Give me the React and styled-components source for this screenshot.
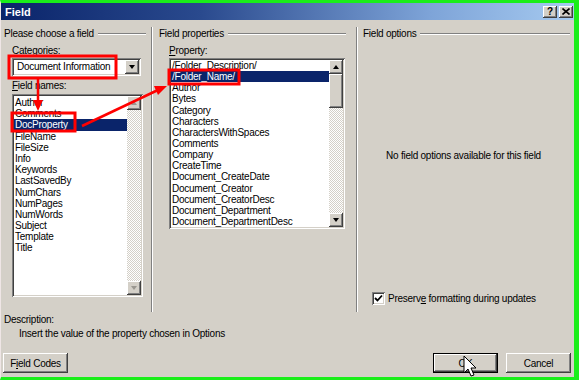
import React from "react";
import styled, { createGlobalStyle } from "styled-components";

const GlobalStyle = createGlobalStyle`
  html, body { margin: 0; padding: 0; background: #fff; }
  body {
    font-family: "Liberation Sans", Arial, sans-serif;
    font-size: 10px;
    letter-spacing: -0.25px;
    color: #000;
  }
`;

const raised = `
  background: #d4d0c8;
  box-shadow: inset -1px -1px #404040, inset 1px 1px #fff,
    inset -2px -2px #808080, inset 2px 2px #d4d0c8;
`;

const sunken = `
  background: #fff;
  box-shadow: inset 1px 1px #808080, inset -1px -1px #fff,
    inset 2px 2px #404040, inset -2px -2px #d4d0c8;
`;

const Frame = styled.div`
  position: relative;
  width: 579px;
  height: 380px;
  box-sizing: border-box;
  border-top: 3px solid #1aee1a;
  border-right: 5px solid #1aee1a;
  border-bottom: 3px solid #1aee1a;
  border-left: 1px solid #efe6e6;
  background: #d4d0c8;
  display: flex;
  flex-direction: column;
  overflow: hidden;
`;

const TitleBar = styled.div`
  height: 17px;
  flex: none;
  display: flex;
  align-items: center;
  padding: 0 1px 0 4px;
  background: linear-gradient(90deg, #0a246a 0%, #2a4a8e 35%, #7ea4d8 75%, #a6caf0 100%);
`;

const Title = styled.span`
  flex: 1;
  color: #fff;
  font-weight: bold;
  font-size: 11px;
  letter-spacing: 0;
`;

const CaptionButton = styled.div`
  ${raised}
  width: 14px;
  height: 12px;
  margin-left: 2px;
  display: flex;
  align-items: center;
  justify-content: center;
  font-weight: bold;
  font-size: 10px;
  line-height: 1;
`;

const Main = styled.div`
  height: 292px;
  flex: none;
  display: flex;
`;

const Column = styled.div`
  width: ${(p) => p.$w || "auto"};
  flex: ${(p) => (p.$w ? "none" : "1")};
  display: flex;
  flex-direction: column;
  padding-left: ${(p) => p.$pl}px;
  padding-right: ${(p) => p.$pr}px;
  box-sizing: border-box;
`;

const Divider = styled.div`
  width: 0;
  margin-top: 7px;
  border-left: 1px solid #808080;
  border-right: 1px solid #fff;
`;

const GroupHeader = styled.div`
  display: flex;
  align-items: center;
  padding-top: 7px;
  height: 13px;
  line-height: 13px;
  gap: 4px;
`;

const Rule = styled.div`
  flex: 1;
  border-top: 1px solid #808080;
  border-bottom: 1px solid #fff;
`;

const Inset = styled.div`
  display: flex;
  flex-direction: column;
  padding-left: ${(p) => p.$pl}px;
`;

const Label = styled.div`
  line-height: 13px;
  margin-top: ${(p) => p.$mt}px;
`;

const Combo = styled.div`
  ${sunken}
  width: 129px;
  height: 18px;
  margin-top: 1px;
  box-sizing: border-box;
  padding: 2px;
  display: flex;
  align-items: stretch;
`;

const ComboText = styled.div`
  flex: 1;
  padding-left: 3px;
  line-height: 14px;
  white-space: nowrap;
`;

const ListBox = styled.div`
  ${sunken}
  width: ${(p) => p.$w}px;
  height: ${(p) => p.$h}px;
  margin-top: ${(p) => p.$mt}px;
  box-sizing: border-box;
  padding: 2px;
  display: flex;
`;

const Items = styled.div`
  flex: 1;
  padding-top: ${(p) => p.$pt}px;
  overflow: hidden;
`;

const Item = styled.div`
  height: ${(p) => p.$lh}px;
  line-height: ${(p) => p.$lh}px;
  padding-left: 1px;
  white-space: nowrap;
  background: ${(p) => (p.$selected ? "#0a246a" : "transparent")};
  color: ${(p) => (p.$selected ? "#fff" : "#000")};
`;

const ScrollBar = styled.div`
  width: 14px;
  display: flex;
  flex-direction: column;
  background-color: #ece9e4;
  background-image: repeating-conic-gradient(#d4d0c8 0 25%, #fff 0 50%);
  background-size: 2px 2px;
`;

const ScrollButton = styled.div`
  ${raised}
  height: ${(p) => p.$h || 14}px;
  width: ${(p) => (p.$wide ? "14px" : "auto")};
  flex: none;
  display: flex;
  align-items: center;
  justify-content: center;
`;

const Arrow = styled.div`
  width: 0;
  height: 0;
  border-left: 3.5px solid transparent;
  border-right: 3.5px solid transparent;
  ${(p) => (p.$up ? "border-bottom" : "border-top")}: 4px solid ${(p) =>
    p.$disabled ? "#9a9790" : "#000"};
`;

const Track = styled.div`
  flex: 1;
`;

const Message = styled.div`
  text-align: center;
  line-height: 13px;
  margin-top: 109px;
  padding-right: 6px;
`;

const CheckRow = styled.div`
  display: flex;
  align-items: center;
  gap: 3px;
  margin-top: 130px;
  padding-left: 9px;
  line-height: 13px;
`;

const CheckBox = styled.div`
  ${sunken}
  width: 13px;
  height: 13px;
  display: flex;
  align-items: center;
  justify-content: center;
`;

const Description = styled.div`
  padding-left: 3px;
  line-height: 14px;
  margin-top: 1px;
`;

const DescText = styled.div`
  padding-left: 15px;
`;

const ButtonRow = styled.div`
  display: flex;
  align-items: center;
  margin-top: 12px;
  padding-left: 2px;
  padding-right: 3px;
`;

const Button = styled.div`
  ${raised}
  width: ${(p) => p.$w}px;
  height: 20px;
  margin-left: ${(p) => p.$ml || 0}px;
  display: flex;
  align-items: center;
  justify-content: center;
  ${(p) =>
    p.$default &&
    `box-shadow: inset 0 0 0 1px #000, inset -2px -2px #404040, inset 2px 2px #fff, inset -3px -3px #808080;`}
`;

const Spacer = styled.div`
  flex: 1;
`;

const Overlay = styled.svg`
  position: absolute;
  left: -1px;
  top: -3px;
  pointer-events: none;
`;

const Underline = styled.span`
  text-decoration: underline;
`;

const u = (s, i) => (
  <>
    {s.slice(0, i)}
    <Underline>{s[i]}</Underline>
    {s.slice(i + 1)}
  </>
);

const fieldNames = [
  "Author",
  "Comments",
  "DocProperty",
  "FileName",
  "FileSize",
  "Info",
  "Keywords",
  "LastSavedBy",
  "NumChars",
  "NumPages",
  "NumWords",
  "Subject",
  "Template",
  "Title",
];

const properties = [
  "/Folder_Description/",
  "/Folder_Name/",
  "Author",
  "Bytes",
  "Category",
  "Characters",
  "CharactersWithSpaces",
  "Comments",
  "Company",
  "CreateTime",
  "Document_CreateDate",
  "Document_Creator",
  "Document_CreatorDesc",
  "Document_Department",
  "Document_DepartmentDesc",
];

function Scroll({ disabled, thumb }) {
  return (
    <ScrollBar>
      <ScrollButton>
        <Arrow $up $disabled={disabled} />
      </ScrollButton>
      {thumb && <ScrollButton $h={34} />}
      <Track />
      <ScrollButton>
        <Arrow $disabled={disabled} />
      </ScrollButton>
    </ScrollBar>
  );
}

export default function App() {
  return (
    <>
      <GlobalStyle />
      <Frame>
        <TitleBar>
          <Title>Field</Title>
          <CaptionButton>?</CaptionButton>
          <CaptionButton>
            <svg width="8" height="7" viewBox="0 0 8 7">
              <path d="M0.5 0.5 L7.5 6.5 M7.5 0.5 L0.5 6.5" stroke="#000" strokeWidth="1.6" />
            </svg>
          </CaptionButton>
        </TitleBar>

        <Main>
          <Column $w="150px" $pl={3} $pr={5}>
            <GroupHeader>
              Please choose a field
              <Rule />
            </GroupHeader>
            <Inset $pl={8}>
              <Label $mt={4}>{u("Categories:", 1)}</Label>
              <Combo>
                <ComboText>Document Information</ComboText>
                <ScrollButton $wide>
                  <Arrow />
                </ScrollButton>
              </Combo>
              <Label $mt={3}>{u("Field names:", 0)}</Label>
              <ListBox $w={131} $h={203} $mt={2}>
                <Items $pt={1}>
                  {fieldNames.map((n) => (
                    <Item key={n} $lh={11.2} $selected={n === "DocProperty"}>
                      {n}
                    </Item>
                  ))}
                </Items>
                <Scroll disabled />
              </ListBox>
            </Inset>
          </Column>

          <Divider />

          <Column $w="203px" $pl={6} $pr={10}>
            <GroupHeader>
              Field properties
              <Rule />
            </GroupHeader>
            <Inset $pl={10}>
              <Label $mt={4}>{u("Property:", 0)}</Label>
              <ListBox $w={176} $h={171} $mt={1}>
                <Items $pt={0}>
                  {properties.map((n) => (
                    <Item key={n} $lh={11.15} $selected={n === "/Folder_Name/"}>
                      {n}
                    </Item>
                  ))}
                </Items>
                <Scroll thumb />
              </ListBox>
            </Inset>
          </Column>

          <Divider />

          <Column $pl={5} $pr={4}>
            <GroupHeader>
              Field options
              <Rule />
            </GroupHeader>
            <Message>No field options available for this field</Message>
            <CheckRow>
              <CheckBox>
                <svg width="9" height="9" viewBox="0 0 9 9">
                  <path d="M1 4 L3.5 6.5 L8 1.5" fill="none" stroke="#000" strokeWidth="1.8" />
                </svg>
              </CheckBox>
              <span>Preser{u("ve", 1)} formatting during updates</span>
            </CheckRow>
          </Column>
        </Main>

        <Description>
          <div>Description:</div>
          <DescText>Insert the value of the property chosen in Options</DescText>
        </Description>

        <ButtonRow>
          <Button $w={65}>{u("Field Codes", 1)}</Button>
          <Spacer />
          <Button $w={65} $default>
            OK
          </Button>
          <Button $w={65} $ml={8}>
            Cancel
          </Button>
        </ButtonRow>

        <Overlay width="579" height="380" viewBox="0 0 579 380">
          <g fill="none" stroke="#f00" strokeWidth="3">
            <rect x="9" y="56" width="107" height="22" />
            <rect x="12" y="113" width="63" height="18" />
            <rect x="169" y="70" width="70" height="14" />
          </g>
          <g stroke="#f00" strokeWidth="2.5">
            <line x1="38" y1="79" x2="38" y2="103" />
            <line x1="82" y1="126" x2="158" y2="90" />
          </g>
          <g fill="#f00">
            <polygon points="33,100 43,100 38,111" />
            <polygon points="167,86 154,86 158,95" />
          </g>
          <path
            d="M464 356 L464 373 L468 369 L471 376 L474 375 L471 368 L476 368 Z"
            fill="#fff"
            stroke="#000"
            strokeWidth="1"
          />
        </Overlay>
      </Frame>
    </>
  );
}
